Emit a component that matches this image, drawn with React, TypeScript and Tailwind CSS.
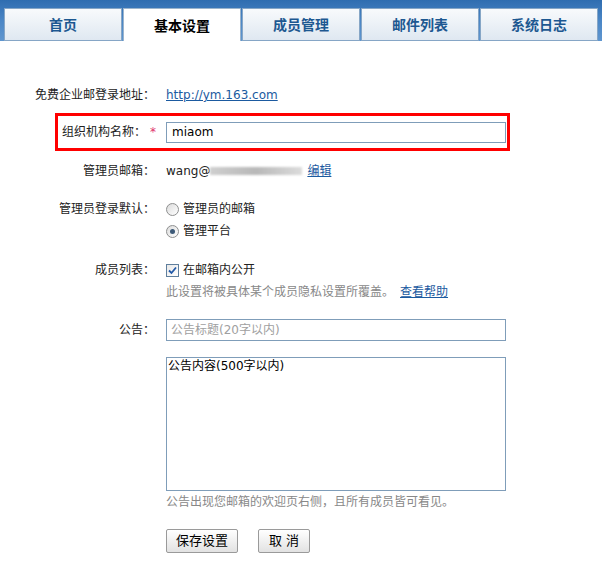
import { useState } from "react";

const tabs = ["首页", "基本设置", "成员管理", "邮件列表", "系统日志"];

function Radio({ checked }: { checked: boolean }) {
  return (
    <span className="w-[13px] h-[13px] rounded-full border border-[#8e8f8f] bg-gradient-to-br from-[#dcdcdc] to-white flex items-center justify-center">
      {checked && <span className="w-[5px] h-[5px] rounded-full bg-[#3d5a78]" />}
    </span>
  );
}

function Checkbox() {
  return (
    <span className="w-[13px] h-[13px] border border-[#5f7f9d] bg-gradient-to-br from-[#e8e8e8] to-white flex items-center justify-center">
      <svg width="9" height="9" viewBox="0 0 9 9">
        <path d="M1 4.5 L3.5 7 L8 1.5" fill="none" stroke="#2159a8" strokeWidth="1.8" />
      </svg>
    </span>
  );
}

export default function App() {
  const [active, setActive] = useState(1);
  const [name, setName] = useState("miaom");

  return (
    <div
      className="w-[602px] h-[569px] bg-white text-[12px] text-[#222]"
      style={{ fontFamily: '"DejaVu Sans", "Noto Sans CJK SC", sans-serif' }}
    >
      {/* tab bar */}
      <div className="h-[41px] bg-gradient-to-b from-[#2f6db0] via-[#4a86c6] to-[#5f96cf] pt-[8px] pl-[4px] flex items-end">
        {tabs.map((t, i) => (
          <button
            key={t}
            onClick={() => setActive(i)}
            className={
              i === active
                ? "w-[118px] h-[33px] mr-[1px] bg-white border-t border-x border-[#9bb4cc] text-[14px] font-bold text-black"
                : "w-[118px] h-[33px] mr-[1px] bg-gradient-to-b from-[#f8fafc] to-[#dfe8f1] border border-[#86a6c6] text-[14px] font-bold text-[#1d5891]"
            }
            style={{ fontFamily: '"Noto Sans CJK SC", sans-serif' }}
          >
            {t}
          </button>
        ))}
      </div>

      <div className="pt-[43px]">
        {/* row 1 */}
        <div className="flex h-[22px] items-center">
          <div className="w-[155px] text-right">免费企业邮登录地址：</div>
          <a href="#" className="ml-[11px] text-[#1b5aa0] underline">
            http://ym.163.com
          </a>
        </div>

        {/* org name, highlighted */}
        <div className="mt-[7px] ml-[55px] w-[455px] h-[38px] border-[3px] border-[#ff0000] flex items-center">
          <div className="w-[100px] text-right pr-[2px]">
            组织机构名称：<span className="text-[#e0336c] ml-[4px]">*</span>
          </div>
          <input
            value={name}
            onChange={(e) => setName(e.target.value)}
            className="ml-[8px] w-[340px] h-[21px] border border-[#7f9db9] px-[5px] text-[12px] text-black outline-none"
          />
        </div>

        {/* admin mail */}
        <div className="mt-[9px] flex h-[22px] items-center">
          <div className="w-[155px] text-right">管理员邮箱：</div>
          <span className="ml-[11px]">wang@</span>
          <span className="w-[92px] h-[8px] bg-gradient-to-r from-[#cfcfcf] via-[#b8b8b8] to-[#dcdcdc] blur-[1px]" />
          <a href="#" className="ml-[5px] text-[#1b5aa0] underline">
            编辑
          </a>
        </div>

        {/* admin login default */}
        <div className="mt-[16px] flex">
          <div className="w-[155px] text-right leading-[22px]">管理员登录默认：</div>
          <div className="ml-[11px]">
            <label className="flex items-center gap-[4px] h-[22px]">
              <Radio checked={false} />
              管理员的邮箱
            </label>
            <label className="flex items-center gap-[4px] h-[22px]">
              <Radio checked />
              管理平台
            </label>
          </div>
        </div>

        {/* member list */}
        <div className="mt-[17px] flex">
          <div className="w-[155px] text-right leading-[22px]">成员列表：</div>
          <div className="ml-[11px]">
            <label className="flex items-center gap-[4px] h-[22px]">
              <Checkbox />
              在邮箱内公开
            </label>
            <div className="h-[22px] flex items-center text-[#888]">
              此设置将被具体某个成员隐私设置所覆盖。
              <a href="#" className="ml-[6px] text-[#1b5aa0] underline">
                查看帮助
              </a>
            </div>
          </div>
        </div>

        {/* notice */}
        <div className="mt-[16px] flex items-center h-[22px]">
          <div className="w-[155px] text-right">公告：</div>
          <input
            placeholder="公告标题(20字以内)"
            className="ml-[11px] w-[340px] h-[22px] border border-[#7f9db9] px-[4px] text-[12px] placeholder:text-[#a0a0a0] outline-none"
          />
        </div>

        <div className="mt-[16px] ml-[166px]">
          <textarea
            defaultValue="公告内容(500字以内)"
            className="w-[340px] h-[134px] border border-[#7f9db9] px-[1px] py-[1px] text-[12px] text-black resize-none outline-none block leading-[15px]"
          />
          <div className="h-[22px] flex items-center text-[#888]">
            公告出现您邮箱的欢迎页右侧，且所有成员皆可看见。
          </div>
          <div className="mt-[16px] flex gap-[20px]">
            <button className="w-[72px] h-[24px] border border-[#9a9a9a] rounded-[2px] bg-gradient-to-b from-white to-[#e2e2e2] text-[13px] text-black">
              保存设置
            </button>
            <button className="w-[52px] h-[24px] border border-[#9a9a9a] rounded-[2px] bg-gradient-to-b from-white to-[#e2e2e2] text-[13px] text-black">
              取 消
            </button>
          </div>
        </div>
      </div>
    </div>
  );
}
